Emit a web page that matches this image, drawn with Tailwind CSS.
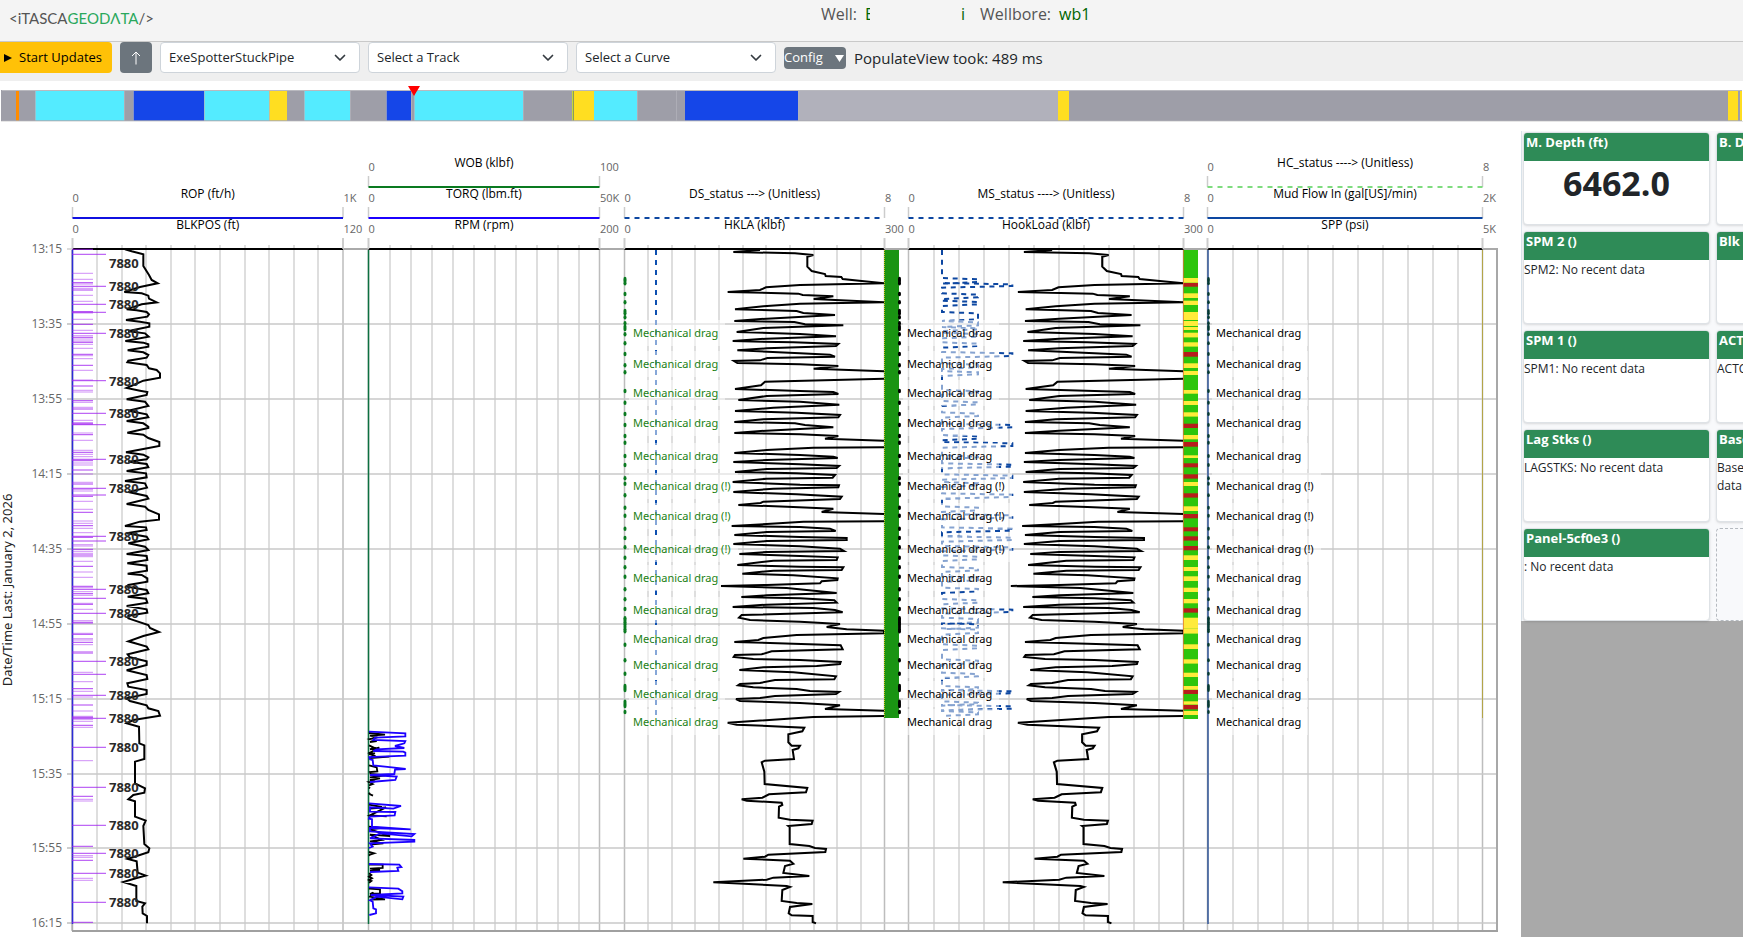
<!DOCTYPE html>
<html lang="en">
<head>
<meta charset="utf-8">
<title>Itasca Geodata – wb1</title>
<script src="https://cdn.jsdelivr.net/npm/@tailwindcss/browser@4"></script>
</head>
<body class="flex h-screen flex-col overflow-hidden bg-white font-['Open_Sans','Noto_Sans',sans-serif] text-[#212529]">

<header class="relative flex h-[42px] shrink-0 items-start border-b border-[#c9c9c9] bg-[#f4f4f4]">
  <a href="#" class="ml-[9px] mt-1.5 flex font-['Lato',sans-serif] text-[15px] leading-6 text-[#555]"><span>&lt;iTASCA</span><span class="text-[#2aa85c]">GEOD&Lambda;TA</span><span>/&gt;</span></a>
  <div class="absolute left-[821px] top-[3px] flex text-[16px] leading-[22px] text-[#555]">
    <span>Well:</span>
    <span class="ml-2 w-[5px] overflow-hidden text-[#006400]">E</span>
    <span class="ml-[91px] text-[#006400]">i</span>
    <span class="ml-[15px]">Wellbore:</span>
    <span class="ml-2 text-[#006400]">wb1</span>
  </div>
</header>

<div class="flex h-[39px] shrink-0 items-start gap-2 bg-[#efefef] text-[13px]">
  <button class="flex h-[31px] w-28 items-center rounded-r bg-[#ffc107] pl-1 text-black"><svg class="mr-[7px] h-2 w-2" viewBox="0 0 8 8"><path d="M0 0v8l8-4z"/></svg>Start Updates</button>
  <button aria-label="Up" class="flex h-[31px] w-8 items-center justify-center rounded bg-[#6c757d]"><svg width="12" height="14" viewBox="0 0 12 14" fill="none" stroke="#fff"><path d="M6 13.5V1M2 5l4-4 4 4"/></svg></button>
  <label class="relative w-[200px]"><select aria-label="View" class="h-[31px] w-full appearance-none rounded border border-[#ced4da] bg-white pl-2"><option>ExeSpotterStuckPipe</option></select><svg class="pointer-events-none absolute right-3.5 top-2.5" width="12" height="12" viewBox="0 0 12 12" fill="none" stroke="#343a40" stroke-width="1.7" stroke-linecap="round" stroke-linejoin="round"><path d="M1.5 3.5 6 8l4.500-4.500"/></svg></label>
  <label class="relative w-[200px]"><select aria-label="Track" class="h-[31px] w-full appearance-none rounded border border-[#ced4da] bg-white pl-2"><option>Select a Track</option></select><svg class="pointer-events-none absolute right-3.5 top-2.5" width="12" height="12" viewBox="0 0 12 12" fill="none" stroke="#343a40" stroke-width="1.7" stroke-linecap="round" stroke-linejoin="round"><path d="M1.5 3.5 6 8l4.500-4.500"/></svg></label>
  <label class="relative w-[200px]"><select aria-label="Curve" class="h-[31px] w-full appearance-none rounded border border-[#ced4da] bg-white pl-2"><option>Select a Curve</option></select><svg class="pointer-events-none absolute right-3.5 top-2.5" width="12" height="12" viewBox="0 0 12 12" fill="none" stroke="#343a40" stroke-width="1.7" stroke-linecap="round" stroke-linejoin="round"><path d="M1.5 3.5 6 8l4.500-4.500"/></svg></label>
  <button class="mt-[5px] flex h-[22px] w-[62px] items-center justify-between rounded bg-[#6c757d] pr-0.5 text-[13px] text-white">Config<svg width="9" height="7" viewBox="0 0 9 7" fill="#fff"><path d="M0 0h9L4.500 7z"/></svg></button>
  <span class="mt-[5px] text-[15px] leading-[22px]">PopulateView took: 489 ms</span>
</div>

<svg class="mt-1 block w-full shrink-0" viewBox="0 85 1743 37" role="img" aria-label="Activity timeline"><g id="timeline"></g><path d="M408 86h12l-6 10z" fill="#f00"/></svg>

<main class="flex min-h-0 flex-1">
  <section class="min-w-0 flex-1">
    <svg id="chart" class="block w-full" viewBox="0 122 1521 815" font-size="11" font-family="'Open Sans', sans-serif"></svg>
  </section>
  <aside class="w-[222px] shrink-0 overflow-hidden pt-[9px]">
    <div class="flex h-full flex-col bg-[#a9a9a9]">
      <div class="grid h-[490px] w-[382px] shrink-0 grid-cols-2 grid-rows-5 gap-1.5 border-l border-[#dbe5ec] bg-[#f8f9fb] pl-px pt-px">
        <article class="overflow-hidden rounded border border-[#dee2e6] bg-white shadow-sm"><h2 class="h-7 bg-[#2e8b57] pl-0.5 text-[13px] font-bold leading-[18px] text-white">M. Depth (ft)</h2><p class="text-center text-[34px] font-bold leading-[44px]">6462.0</p></article>
        <article class="overflow-hidden rounded border border-[#dee2e6] bg-white shadow-sm"><h2 class="h-7 bg-[#2e8b57] pl-0.5 text-[13px] font-bold leading-[18px] text-white">B. Depth (ft)</h2></article>
        <article class="overflow-hidden rounded border border-[#dee2e6] bg-white shadow-sm"><h2 class="h-7 bg-[#2e8b57] pl-0.5 text-[13px] font-bold leading-[18px] text-white">SPM 2 ()</h2><p class="pt-px text-[12px] leading-[18px]">SPM2: No recent data</p></article>
        <article class="overflow-hidden rounded border border-[#dee2e6] bg-white shadow-sm"><h2 class="h-7 bg-[#2e8b57] pl-0.5 text-[13px] font-bold leading-[18px] text-white">Blk Height (ft)</h2></article>
        <article class="overflow-hidden rounded border border-[#dee2e6] bg-white shadow-sm"><h2 class="h-7 bg-[#2e8b57] pl-0.5 text-[13px] font-bold leading-[18px] text-white">SPM 1 ()</h2><p class="pt-px text-[12px] leading-[18px]">SPM1: No recent data</p></article>
        <article class="overflow-hidden rounded border border-[#dee2e6] bg-white shadow-sm"><h2 class="h-7 bg-[#2e8b57] pl-0.5 text-[13px] font-bold leading-[18px] text-white">ACTC ()</h2><p class="pt-px text-[12px] leading-[18px]">ACTC: No recent data</p></article>
        <article class="overflow-hidden rounded border border-[#dee2e6] bg-white shadow-sm"><h2 class="h-7 bg-[#2e8b57] pl-0.5 text-[13px] font-bold leading-[18px] text-white">Lag Stks ()</h2><p class="pt-px text-[12px] leading-[18px]">LAGSTKS: No recent data</p></article>
        <article class="overflow-hidden rounded border border-[#dee2e6] bg-white shadow-sm"><h2 class="h-7 bg-[#2e8b57] pl-0.5 text-[13px] font-bold leading-[18px] text-white">BaseTime ()</h2><p class="pt-px text-[12px] leading-[18px]">BaseTime: No recent<br>data</p></article>
        <article class="overflow-hidden rounded border border-[#dee2e6] bg-white shadow-sm"><h2 class="h-7 bg-[#2e8b57] pl-0.5 text-[13px] font-bold leading-[18px] text-white">Panel-5cf0e3 ()</h2><p class="pt-px text-[12px] leading-[18px]">: No recent data</p></article>
        <div class="rounded border border-dashed border-[#b5bac0]"></div>
      </div>
    </div>
  </aside>
</main>

<script>
const G = '#9e9ea8', C = '#54ebff', B = '#1546e8', Y = '#ffde21';
// timeline: [start, colour], each segment runs to the next start
const seg = [[1,G],[16,'#ff8c00'],[19,G],[35,C],[124,G],[133,B],[204,C],[269,Y],[287,G],[304,C],[350,G],[386,B],[411,G],[414,C],[523,G],[572,'#c6d838'],[573,'#8a9a60'],[574,Y],[594,C],[637,G],[685,B],[798,'#b1b1bb'],[1058,Y],[1069,G],[1728,Y],[1738,G],[1740,Y],[1742,G]];
let t = '';
seg.forEach((s, i) => { if (seg[i + 1]) t += `<rect x="${s[0]}" y="90" width="${seg[i + 1][0] - s[0]}" height="31" fill="${s[1]}"/>`; });
for (const x of [35,124,133,204,269,304,350,386,411,414,523,637,676,798]) t += `<path d="M${x + .5} 91V121" stroke="#b4b4bc" stroke-opacity=".7"/>`;
t += '<path d="M2 90.500H1742" stroke="#b9b9bf"/><path d="M2 120.500H1742" stroke="#aaaab2" stroke-opacity=".7"/><path d="M1 121.500H1743" stroke="#e6e6e6"/>';
document.getElementById('timeline').innerHTML = t;

// chart
const line = (x1, y1, x2, y2, c, w = 1, extra = '') => `<path d="M${x1} ${y1}L${x2} ${y2}" stroke="${c}" stroke-width="${w}" fill="none" ${extra}/>`;
const text = (x, y, s, extra = '') => `<text x="${x}" y="${y}" ${extra}>${s}</text>`;
const TOP = 249, END = 923.3;
const tracks = [[72.5,343],[368.5,599.5],[624.5,884.5],[908.5,1183.5],[1207.5,1482.5]];
let s = '';
for (const [a, b] of tracks) {
  for (let i = 1; i < 11; i++) { const x = Math.round(a + (b - a) * i / 11); s += line(x, 245, x, 930, '#dedede', 2); }
  s += line(a, 238, a, 930, '#bdbdbd', 1.5) + line(b, 238, b, 930, '#bdbdbd', 1.5);
}
for (let i = 0; i < 10; i++) {
  const y = Math.round(TOP + i * 74.93);
  if (i) s += line(67, y, 1497, y, '#c9c9c9', 1.3);
  s += line(67, y, 72, y, '#c9c9c9', 1.3);
  const m = 13 * 60 + 15 + i * 20;
  s += text(62, y + 4, Math.floor(m / 60) + ':' + String(m % 60).padStart(2, '0'), 'text-anchor="end" font-size="12" fill="#666"');
}
s += line(72, 249, 1498, 249, '#aaa', 2) + line(1497, 248, 1497, 932, '#a8a8a8', 2) + line(72, 931, 1498, 931, '#a0a0a0', 2) + line(72, 250, 72, 931, '#a0a0a0', 1);
for (const [a, b] of tracks) s += line(a, 249, b, 249, '#000', 2);

// scale headers: [track, line y, title, max, colour, dashed]
const heads = [[0,218,'ROP (ft/h)','1K','#1010e0'],[0,249,'BLKPOS (ft)','120'],[1,187,'WOB (klbf)','100','#0a7a20'],[1,218,'TORQ (lbm.ft)','50K','#1c00ff'],[1,249,'RPM (rpm)','200'],
 [2,218,'DS_status ---&gt; (Unitless)','8','#0d47a1',1],[2,249,'HKLA (klbf)','300'],[3,218,'MS_status ----&gt; (Unitless)','8','#0d47a1',1],[3,249,'HookLoad (klbf)','300'],
 [4,187,'HC_status ----&gt; (Unitless)','8','#7fdc7f',1],[4,218,'Mud Flow In (gal[US]/min)','2K','#0d47a1'],[4,249,'SPP (psi)','5K']];
for (const [k, y, title, max, c, d] of heads) {
  const [a, b] = tracks[k];
  s += line(a, y - 11, a, y, '#ccc', 1.5) + line(b, y - 11, b, y, '#ccc', 1.5);
  if (c) s += line(a, y, b, y, c, 2, d ? 'stroke-dasharray="5 5"' : '');
  s += text((a + b) / 2, y - 20, title, 'text-anchor="middle" fill="#000" font-size="12"') + text(a, y - 16, '0', 'fill="#666"') + text(b + .5, y - 16, max, 'fill="#666"');
}
s += text(0, 0, 'Date/Time Last: January 2, 2026', `transform="translate(12 590) rotate(-90)" text-anchor="middle" font-family="'Noto Sans', sans-serif" font-size="13" fill="#222"`);

// left edge traces
s += line(72.5, 250, 72.5, 924, '#2c2cd8', 1.5) + line(368.5, 250, 368.5, 924, '#0c7040', 1.5) + line(1208, 250, 1208, 924, '#2f5597', 1.5) + line(1482.5, 250, 1482.5, 718, '#b3a548', 1);

// depth ticks, in thirds of a pixel below y = 140
const short = [328,400,418,428,432,445,450,466,484,515,519,538,553,571,587,592,597,603,607,613,625,643,647,656,676,691,720,738,751,756,782,787,802,807,841,848,852,850,879,884,901,931,937,943,950,962,969,975,990,1002,1027,1032,1048,1053,1069,1084,1108,1117,1143,1150,1157,1165,1178,1192,1214,1218,1228,1234,1240,1245,1250,1264,1279,1296,1312,1339,1343,1355,1361,1366,1390,1393,1408,1442,1447,1450,1480,1483,1496,1500,1507,1514,1535,1539,1597,1625,1646,1654,1671,1695,1713,1729,1732,1738,1744,1756,1762,1862,1969,1978,1983,2119,2147,2152,2161,2215,2221,2347];
const long = [343,439,493,517,580,722,820,854,958,1045,1065,1189,1203,1348,1375,1420,1564,1603,1666,1735,1822,1942,2056,2140,2200,2287];
const X = v => Math.round(v * 10) / 10;
short.forEach((v, i) => s += line(72, X(140 + v / 3), 93, X(140 + v / 3), '#a020f0', 1, `stroke-opacity="${i % 3 ? .5 : .85}"`));
for (const v of long) s += line(72, X(140 + v / 3), 106, X(140 + v / 3), '#a020f0', 1, 'stroke-opacity=".85"');

// block position
const blk = '375,328 395,334 430,343 430,378 447,405 455,420 473,430 420,441 373,456 425,460 445,467 447,476 470,487 425,493 380,508 410,511 440,516 447,523 442,530 378,540 420,545 448,550 448,560 400,570 385,574 435,580 446,590 376,603 430,608 445,613 445,620 383,631 430,637 445,645 440,653 385,662 382,667 440,675 447,685 470,690 480,700 480,713 430,722 380,744 420,752 442,756 440,765 380,778 435,785 445,798 385,812 440,823 445,832 380,843 430,850 445,860 445,864 382,878 430,884 445,894 478,906 478,918 430,927 378,937 430,944 445,952 440,958 385,965 440,972 445,982 380,993 438,1000 440,1012 375,1023 435,1030 441,1043 385,1056 440,1068 445,1076 380,1092 435,1100 445,1110 477,1123 477,1139 420,1145 375,1158 438,1162 440,1170 380,1180 440,1190 445,1198 385,1210 435,1220 445,1230 380,1242 440,1248 442,1260 382,1270 440,1277 441,1292 383,1301 425,1305 442,1315 442,1325 385,1335 380,1340 440,1350 445,1360 383,1370 438,1376 442,1388 380,1398 440,1408 442,1418 385,1427 385,1435 445,1455 450,1464 477,1476 430,1488 385,1504 440,1520 445,1528 383,1543 390,1552 440,1564 440,1575 380,1591 440,1605 442,1617 382,1630 385,1640 440,1650 440,1662 380,1675 390,1683 440,1696 445,1705 475,1713 480,1727 400,1740 380,1750 417,1760 418,1810 433,1816 433,1857 405,1865 405,1930 435,1945 433,1958 400,1965 385,1978 405,1984 405,2030 437,2042 430,2058 433,2112 448,2125 445,2137 383,2157 410,2164 413,2198 437,2207 410,2214 370,2226 409,2238 409,2283 435,2290 427,2300 428,2320 441,2328 441,2350';
s += `<g transform="translate(0 140) scale(.33333)"><polyline points="${blk}" fill="none" stroke="#000" stroke-width="6"/></g>`;
for (const v of [370,439,493,580,724,820,958,1045,1189,1348,1420,1564,1666,1735,1822,1942,2056,2140,2200,2287]) s += text(109, Math.round(144 + v / 3 + .5), '7880', 'font-weight="bold" font-size="13" fill="#2a2a2a"');

// torque / rpm
const blue = ['57,95 166,100 166,109 75,113 70,120 166,123 163,130 135,138 163,144 80,148 70,153 160,155 166,158 166,167 58,171 60,178 68,180 70,196 133,203 167,207 135,209 133,222 60,225 140,230 136,240 60,246','57,310 153,318 130,326 60,322 60,335 136,336 134,346 60,350 57,356 66,358 66,380 182,388 60,384 60,394 193,402 185,409 90,400 60,415 193,420 193,425 60,430 68,440 57,444','57,492 148,494 154,501 142,503 145,513 60,516','57,562 145,566 157,574 157,580 62,585 160,590 157,598 80,590 60,601 68,605 70,625 78,628 78,640 58,645'];
const black = ['57,99 105,104 60,107 82,112 60,117 80,123 60,126','57,136 72,143 60,148 88,143 60,158 75,160 57,162 72,167 60,174 118,170','57,196 80,202 82,214 60,216 62,222 105,226 60,232 90,235 60,240 75,244 57,246 68,252 57,256','57,262 60,265','57,278 60,283 69,287','57,314 95,321 60,326 108,322 60,346 110,349','57,380 90,384 60,388 120,408 60,404 95,420 60,424 100,430 60,434','57,456 72,460 60,464 57,467','57,494 98,494 98,504 60,506 90,510 60,513','57,520 64,525 57,530 66,535 57,540 64,543 57,548','57,566 90,568 90,580 60,582 70,578 60,590 105,598 60,599'];
s += '<g transform="translate(350 700) scale(.33333)" fill="none" stroke-width="5.500">';
for (const p of black) s += `<polyline points="${p}" stroke="#000"/>`;
for (const p of blue) s += `<polyline points="${p}" stroke="#1c00ff"/>`;
s += '</g>';

// status bars: [from, to, red?] in thirds of a pixel below y = 230
const st = [[144,158],[159,170,1],[190,204],[212,225],[246,270],[273,288],[291,300],[308,322],[337,350],[366,380,1],[400,414],[423,435],[480,491],[513,525],[547,560],[581,594,1],[615,628],[636,650,1],[676,684],[700,712,1],[733,746,1],[756,768],[790,803,1],[829,843],[852,865,1],[892,904,1],[919,932,1],[948,961,1],[976,990],[1011,1023],[1039,1053],[1073,1086],[1107,1120],[1135,1148,1],[1163,1179],[1179,1195],[1195,1211],[1243,1257],[1288,1301],[1328,1341],[1368,1379],[1380,1392,1],[1414,1424],[1425,1438,1],[1443,1455]];

// status traces
s += line(656, 250, 656, 715, '#0d4fb0', 2, 'stroke-dasharray="5 5"');
let ms = 'M126 60';
for (const [a, b, r] of st) { const x = r ? 337 : 234; ms += `L126 ${a}L${x} ${a + 4}L${x} ${b - 2}L126 ${b + 3}`; }
s += `<g transform="translate(900 230) scale(.33333)"><path d="${ms}" fill="none" stroke="#0d47a1" stroke-width="6" stroke-dasharray="15 14"/></g>`;

// translucent label plates, then the hook load curves on top
const drag = [[310],[403],[490],[580],[679],[769,1],[859,1],[958,1],[1045],[1140],[1227],[1305],[1392],[1477]];
for (const x of [629,903,1212]) {
  s += '<g fill="#fff" fill-opacity=".5">';
  drag.forEach(([v, w], i) => {
    const y = Math.round(230 + v / 3 - 13), n = drag[i + 1] ? Math.round(230 + drag[i + 1][0] / 3 - 13) : y + 26;
    s += `<rect x="${x}" y="${y}" width="${w ? 109 : 96}" height="${Math.min(26, n - y)}"/>`;
  });
  s += '</g>';
}
const hk = '480,60 400,66 585,70 640,75 622,80 622,110 635,123 675,132 677,138 724,141 728,147 785,153 852,160 600,165 498,172 480,180 383,186 595,191 608,195 700,199 641,207 852,217 600,221 490,229 405,238 590,243 610,249 705,255 500,266 403,273 583,276 615,283 730,286 490,294 410,306 600,312 708,319 500,326 398,333 580,337 715,342 708,348 500,355 412,361 600,370 690,374 705,380 502,384 480,391 402,393 412,399 600,403 715,408 641,416 852,424 M852,446 495,455 483,466 405,477 600,483 700,486 715,492 500,498 415,510 600,515 718,524 520,533 405,543 590,548 720,555 715,562 490,568 403,576 585,580 615,585 700,592 500,602 403,609 600,613 715,618 675,626 852,632 M852,652 640,653 500,660 403,669 600,675 700,680 713,684 500,690 400,696 600,703 717,708 710,714 500,717 405,726 590,730 705,735 698,743 500,746 398,756 600,764 717,766 715,772 520,776 400,786 590,793 725,800 720,807 490,815 482,819 415,825 580,831 700,836 665,846 852,852 M852,874 610,875 500,882 395,888 600,891 690,896 707,903 500,906 403,915 600,921 740,924 740,930 500,933 400,942 600,949 720,956 732,963 500,966 418,972 600,978 713,982 710,990 520,992 412,1005 600,1010 730,1012 725,1020 520,1022 427,1031 580,1036 713,1045 712,1050 665,1054 660,1060 500,1065 363,1068 560,1074 710,1089 500,1096 424,1101 600,1105 703,1111 710,1118 500,1124 398,1131 640,1134 705,1140 728,1147 425,1155 417,1163 450,1170 600,1175 720,1182 680,1191 740,1198 852,1202 852,1210 590,1215 490,1224 475,1230 403,1236 580,1241 722,1246 728,1258 515,1264 485,1273 405,1275 401,1281 460,1287 600,1290 722,1296 720,1302 650,1308 490,1312 418,1320 580,1327 708,1339 703,1348 525,1350 480,1359 420,1362 414,1366 460,1372 590,1377 630,1383 717,1386 708,1392 525,1398 480,1404 408,1407 420,1413 600,1419 720,1426 675,1437 852,1442 M852,1458 640,1461 383,1478 410,1484 613,1493 607,1504 565,1513 565,1537 575,1547 600,1547 595,1555 578,1560 582,1587 495,1592 485,1597 493,1625 494,1662 622,1674 618,1687 507,1693 487,1703 425,1708 440,1712 545,1718 547,1725 537,1730 536,1763 570,1769 638,1772 635,1782 565,1788 569,1791 569,1842 628,1848 645,1854 678,1857 676,1866 505,1874 495,1880 430,1886 570,1892 580,1901 555,1908 550,1929 628,1938 520,1943 500,1949 340,1957 560,1968 570,1971 547,1980 545,2013 590,2019 637,2022 570,2031 566,2050 575,2056 638,2058 638,2076 648,2080';
s += `<g fill="none" stroke="#000" stroke-width="6"><path transform="translate(600 230) scale(.33333)" d="M${hk}"/><path transform="translate(882.700 230) scale(.353 .33333)" d="M${hk}"/></g>`;
s += '<rect x="884" y="250" width="15" height="468" fill="#1a9413"/>' + line(884.5, 250, 884.5, 718, '#c8c020', 1, 'stroke-dasharray="1 1"');
s += '<rect x="1183" y="250" width="15" height="469" fill="#2dc50c"/>';
for (const [a, b, r] of st) s += `<rect x="1183" y="${X(230 + a / 3)}" width="15" height="${X((b - a) / 3)}" fill="${r ? '#b71c1c' : '#ffeb3b'}"/>`;
s += line(1183.5, 250, 1183.5, 719, '#e07030', 1, 'stroke-opacity=".7"');

// connection dots
const dots = [147,152,160,192,217,243,250,262,280,290,297,313,340,372,406,427,483,518,552,585,618,638,678,705,745,761,796,833,857,896,924,952,983,1012,1040,1078,1108,1137,1165,1170,1177,1183,1190,1198,1204,1244,1291,1331,1368,1374,1380,1415,1422,1428,1446];
for (const v of dots) { const y = X(230 + v / 3); s += `<ellipse cx="625" cy="${y}" rx="1.500" ry="2.200" fill="#0a7a20"/><ellipse cx="899.500" cy="${y}" rx="1.500" ry="2.200"/><ellipse cx="1208.500" cy="${y}" rx="1.300" ry="2" fill="#063a30"/>`; }
for (const [v, w] of drag) for (const [x, c] of [[633,'#1a7f14'],[907,'#000'],[1216,'#000']]) s += text(x, Math.round(234 + v / 3), 'Mechanical drag' + (w ? ' (!)' : ''), `fill="${c}" font-family="'Noto Sans', sans-serif" font-size="11"`);
document.getElementById('chart').innerHTML = s;
</script>
</body>
</html>
